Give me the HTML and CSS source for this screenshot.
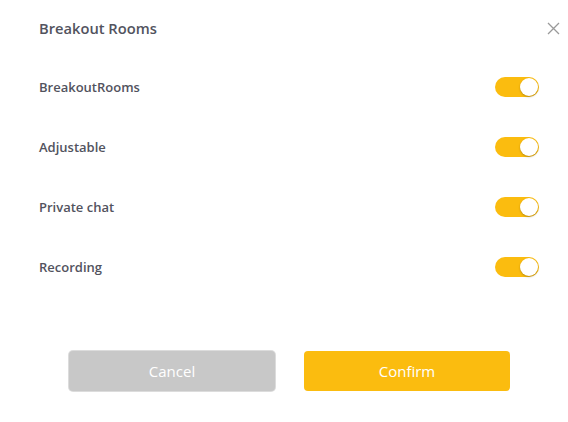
FILE: index.html
```html
<!DOCTYPE html>
<html>
<head>
<meta charset="utf-8">
<link rel="stylesheet" href="styles.css">
</head>
<body>
<div class="dialog">
  <div class="header">
    <div class="title">Breakout Rooms</div>
    <div class="close" aria-label="close">
      <svg width="13" height="13" viewBox="0 0 13 13"><path d="M1 1 L12 12 M12 1 L1 12" stroke="#9a9a9a" stroke-width="1.3" fill="none"/></svg>
    </div>
  </div>
  <div class="rows">
    <div class="row"><span class="label">BreakoutRooms</span><span class="toggle"><span class="knob"></span></span></div>
    <div class="row"><span class="label">Adjustable</span><span class="toggle"><span class="knob"></span></span></div>
    <div class="row"><span class="label">Private chat</span><span class="toggle"><span class="knob"></span></span></div>
    <div class="row"><span class="label">Recording</span><span class="toggle"><span class="knob"></span></span></div>
  </div>
  <div class="actions">
    <button class="btn cancel">Cancel</button>
    <button class="btn confirm">Confirm</button>
  </div>
</div>
</body>
</html>
```
FILE: styles.css
```css
* { box-sizing: border-box; }
html, body { margin: 0; padding: 0; background: #fff; }
body { font-family: "Open Sans", "Noto Sans", sans-serif; color: #52535e; }
.dialog { width: 568px; height: 422px; padding: 0 29px 0 39px; }
.header { height: 56px; display: flex; align-items: center; justify-content: space-between; }
.title { font-size: 14.7px; font-weight: 600; }
.close { width: 13px; height: 13px; display: flex; margin-right: -21px; }
.rows { display: flex; flex-direction: column; padding-top: 1px; }
.row { height: 60px; display: flex; align-items: center; justify-content: space-between; }
.label { font-size: 13px; font-weight: 600; }
.toggle { width: 44px; height: 20px; border-radius: 10px; background: #fbbc0f; position: relative; display: block; }
.knob { position: absolute; right: 1px; top: 1px; width: 18px; height: 18px; border-radius: 50%; background: #fff; box-shadow: 0 1px 2px rgba(0,0,0,0.25); }
.actions { display: flex; gap: 29px; padding-left: 30px; margin-top: 54px; }
.btn { width: 206px; height: 40px; border: none; border-radius: 4px; font-family: inherit; font-size: 15px; color: #fff; }
.cancel { background: #c8c8c8; box-shadow: 0 0 0 1px #dcdcdc; }
.confirm { background: #fbbc0f; }
```
